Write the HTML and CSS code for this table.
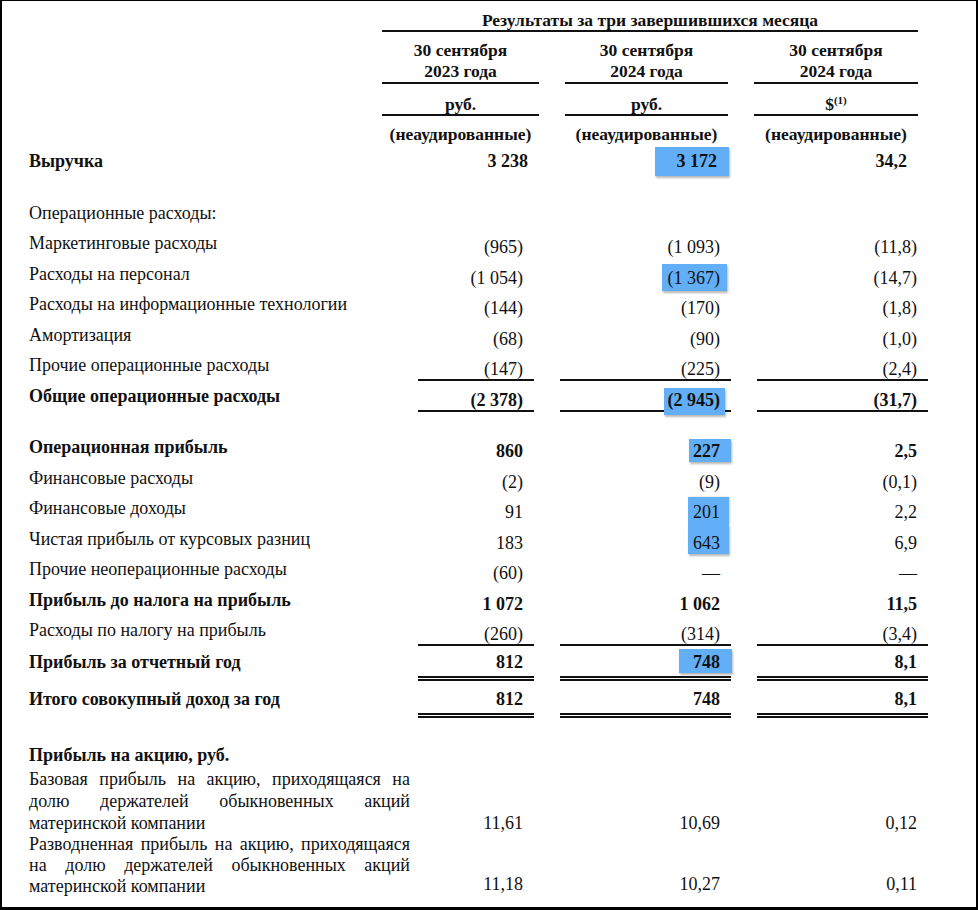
FILE: index.html
```html
<!DOCTYPE html>
<html lang="ru">
<head>
<meta charset="utf-8">
<link rel="stylesheet" href="styles.css">
</head>
<body>
<div class="page">
  <div class="hgrid title-row">
    <div class="title">Результаты за три завершившихся месяца</div>
  </div>
  <div class="hgrid dates">
    <div></div>
    <div class="hc">30 сентября<br>2023 года</div>
    <div class="hc">30 сентября<br>2024 года</div>
    <div class="hc">30 сентября<br>2024 года</div>
  </div>
  <div class="hgrid units">
    <div></div>
    <div class="hc">руб.</div>
    <div class="hc">руб.</div>
    <div class="hc">$<sup>(1)</sup></div>
  </div>
  <div class="hgrid audit">
    <div></div>
    <div class="hc">(неаудированные)</div>
    <div class="hc">(неаудированные)</div>
    <div class="hc">(неаудированные)</div>
  </div>
  <div class="hgrid revenue">
    <div class="lbl b">Выручка</div>
    <div class="hv b">3 238</div>
    <div class="hv b"><span class="hl hl-rev">3 172</span></div>
    <div class="hv b">34,2</div>
  </div>

  <div class="ophead">Операционные расходы:</div>

  <div class="bgrid r">
    <div class="lbl">Маркетинговые расходы</div>
    <div class="v">(965)</div><div class="v">(1 093)</div><div class="v">(11,8)</div>
  </div>
  <div class="bgrid r">
    <div class="lbl">Расходы на персонал</div>
    <div class="v">(1 054)</div><div class="v"><span class="hl hl-pers">(1 367)</span></div><div class="v">(14,7)</div>
  </div>
  <div class="bgrid r">
    <div class="lbl">Расходы на информационные технологии</div>
    <div class="v">(144)</div><div class="v">(170)</div><div class="v">(1,8)</div>
  </div>
  <div class="bgrid r">
    <div class="lbl">Амортизация</div>
    <div class="v">(68)</div><div class="v">(90)</div><div class="v">(1,0)</div>
  </div>
  <div class="bgrid r ul">
    <div class="lbl">Прочие операционные расходы</div>
    <div class="v">(147)</div><div class="v">(225)</div><div class="v">(2,4)</div>
  </div>
  <div class="bgrid r ul">
    <div class="lbl b">Общие операционные расходы</div>
    <div class="v b">(2 378)</div><div class="v b"><span class="hl hl-opex">(2 945)</span></div><div class="v b">(31,7)</div>
  </div>

  <div class="bgrid r gap">
    <div class="lbl b">Операционная прибыль</div>
    <div class="v b">860</div><div class="v b"><span class="hl hl-op">227</span></div><div class="v b">2,5</div>
  </div>
  <div class="bgrid r">
    <div class="lbl">Финансовые расходы</div>
    <div class="v">(2)</div><div class="v">(9)</div><div class="v">(0,1)</div>
  </div>
  <div class="bgrid r">
    <div class="lbl">Финансовые доходы</div>
    <div class="v">91</div><div class="v"><span class="hl hl-fin1">201</span></div><div class="v">2,2</div>
  </div>
  <div class="bgrid r">
    <div class="lbl">Чистая прибыль от курсовых разниц</div>
    <div class="v">183</div><div class="v"><span class="hl hl-fin2">643</span></div><div class="v">6,9</div>
  </div>
  <div class="bgrid r">
    <div class="lbl">Прочие неоперационные расходы</div>
    <div class="v">(60)</div><div class="v">—</div><div class="v">—</div>
  </div>
  <div class="bgrid r">
    <div class="lbl b">Прибыль до налога на прибыль</div>
    <div class="v b">1 072</div><div class="v b">1 062</div><div class="v b">11,5</div>
  </div>
  <div class="bgrid r ul">
    <div class="lbl">Расходы по налогу на прибыль</div>
    <div class="v">(260)</div><div class="v">(314)</div><div class="v">(3,4)</div>
  </div>

  <div class="bgrid tot tot1">
    <div class="lbl b">Прибыль за отчетный год</div>
    <div class="v b">812</div><div class="v b"><span class="hl hl-net">748</span></div><div class="v b">8,1</div>
  </div>
  <div class="bgrid tot tot2">
    <div class="lbl b">Итого совокупный доход за год</div>
    <div class="v b">812</div><div class="v b">748</div><div class="v b">8,1</div>
  </div>

  <div class="eps-head">Прибыль на акцию, руб.</div>
  <div class="bgrid eps eps1">
    <div class="para">Базовая прибыль на акцию, приходящаяся на долю держателей обыкновенных акций материнской компании</div>
    <div class="v">11,61</div><div class="v">10,69</div><div class="v">0,12</div>
  </div>
  <div class="bgrid eps eps2">
    <div class="para">Разводненная прибыль на акцию, приходящаяся на долю держателей обыкновенных акций материнской компании</div>
    <div class="v">11,18</div><div class="v">10,27</div><div class="v">0,11</div>
  </div>
</div>
</body>
</html>
```
FILE: styles.css
```css
* { box-sizing: border-box; }
html, body { margin: 0; background: #fff; }
body {
  font-family: "Liberation Serif", "Times New Roman", serif;
  font-size: 18px;
  color: #111;
}
.page {
  width: 978px;
  height: 910px;
  border: 2px solid #000;
  border-top-width: 1px;
  border-bottom-width: 3px;
  padding-left: 27px;
  overflow: hidden;
}
.b { font-weight: bold; }

/* header */
.hgrid {
  display: grid;
  grid-template-columns: 327px 157px 163px 164px;
  column-gap: 26px;
  font-weight: bold;
  font-size: 17.5px;
  line-height: 20px;
}
.title-row { padding-top: 9px; }
.title {
  grid-column: 2 / 5;
  text-align: center;
  border-bottom: 2px solid #111;
}
.dates { padding-top: 8px; line-height: 21px; }
.dates .hc, .units .hc { border-bottom: 2px solid #111; }
.hc { text-align: center; }
.units { padding-top: 10px; }
.units sup { font-size: 11px; line-height: 0; vertical-align: 6px; }
.audit { padding-top: 8px; }
.revenue { padding-top: 7px; font-size: 18px; }
.hv { text-align: right; padding-right: 11px; }

/* body */
.lbl { line-height: 20px; }
.ophead { margin-top: 32px; line-height: 20px; height: 25px; }
.bgrid {
  display: grid;
  grid-template-columns: 363px 116px 171px 171px;
  column-gap: 26px;
}
.r { height: 30.5px; }
.r .lbl { padding-top: 5px; }
.r .v { padding-top: 9px; }
.v {
  text-align: right;
  padding-right: 11px;
  line-height: 20px;
}
.r.ul .v { height: 31px; border-bottom: 2px solid #111; }
.r.gap { margin-top: 21px; }

.tot .v { padding-bottom: 4px; border-bottom: 5px double #111; }
.tot1 { padding-top: 6px; }
.tot2 { padding-top: 8px; }

.eps-head {
  font-weight: bold;
  line-height: 20px;
  margin-top: 27px;
}
.eps { align-items: end; }
.eps1 { margin-top: 3px; }
.para {
  width: 381px;
  text-align: justify;
  line-height: 22px;
}
.eps2 .para { line-height: 21px; }
.eps .v { line-height: 22px; }
.eps2 .v { padding-bottom: 2px; }

/* highlights */
.hl {
  display: inline-block;
  background: #62aef7;
  line-height: 20px;
  box-shadow: 1px 2px 2px rgba(0, 0, 0, 0.28);
}
.hl-rev  { padding: 4px 12px 5px 22px; margin: -4px -12px -5px 0; }
.hl-pers { padding: 4px 7px 3px 6px;   margin: -4px -7px -3px 0; }
.hl-opex { padding: 2px 5px 5px 4px;   margin: -2px -5px -5px 0; }
.hl-op   { padding: 2px 11px 1px 4px;  margin: -2px -11px -1px 0; }
.hl-fin1 { padding: 5px 9px 2px 5px;   margin: -5px -9px -2px 0; box-shadow: 1px 0 2px rgba(0, 0, 0, 0.2); }
.hl-fin2 { padding: 9px 9px 1px 5px;   margin: -9px -9px -1px 0; }
.hl-net  { padding: 3px 12px 1px 14px; margin: -3px -12px -1px 0; }
```
